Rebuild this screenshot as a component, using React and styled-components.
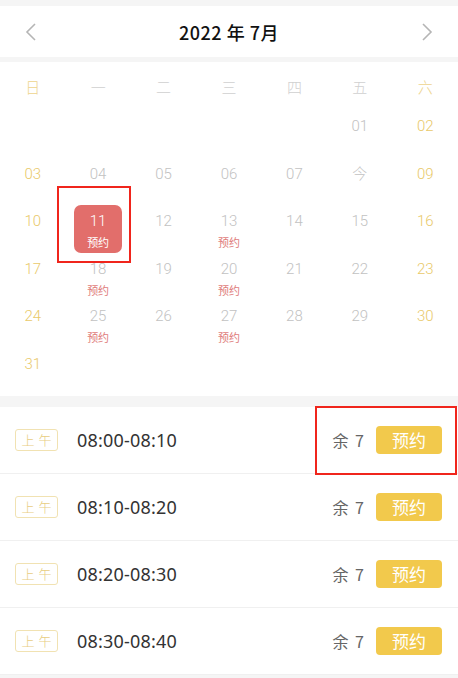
import styled, { createGlobalStyle } from "styled-components";

const GlobalStyle = createGlobalStyle`
    html, body {
        margin: 0;
        padding: 0;
        background: #f5f5f5;
    }
    body {
        font-family: "Noto Sans CJK SC", "Noto Sans", sans-serif;
    }
`;

const Page = styled.div`
    width: 458px;
    padding-top: 6px;
    background: #f5f5f5;
`;

const Header = styled.div`
    height: 51px;
    background: #fff;
    display: flex;
    align-items: center;
    justify-content: space-between;
    padding: 0 24px;
`;

const Title = styled.div`
    font-size: 18px;
    font-weight: 500;
    color: #111;
    letter-spacing: 0.5px;
`;

const Arrow = styled.svg`
    width: 14px;
    height: 18px;
    display: block;
`;

const Calendar = styled.div`
    margin-top: 5px;
    background: #fff;
    padding: 8px 0 8px;
`;

const Grid = styled.div`
    display: grid;
    grid-template-columns: repeat(7, 1fr);
`;

const WeekDay = styled.div`
    height: 32px;
    display: flex;
    align-items: center;
    justify-content: center;
    font-size: 15px;
    font-weight: 300;
    color: ${(p) => (p.$weekend ? "#eed48e" : "#d0d0d0")};
`;

const DayCell = styled.div`
    height: 47.6px;
    display: flex;
    justify-content: center;
    position: relative;
`;

const DayBox = styled.div`
    width: 48px;
    height: 48px;
    margin-top: 8px;
    padding-top: 6px;
    box-sizing: border-box;
    border-radius: 7px;
    display: flex;
    flex-direction: column;
    align-items: center;
    background: ${(p) => (p.$selected ? "#e26e6b" : "transparent")};
`;

const DayNum = styled.span`
    font-family: Roboto, "Noto Sans CJK SC", sans-serif;
    font-weight: 300;
    font-size: 15px;
    line-height: 20px;
    color: ${(p) => (p.$selected ? "#fff" : p.$weekend ? "#e9c96a" : "#c2c2c2")};
`;

const DayTag = styled.span`
    margin-top: 4px;
    font-size: 11px;
    line-height: 14px;
    color: ${(p) => (p.$selected ? "#fff" : "#e07c7a")};
`;

const Mark = styled.div`
    position: absolute;
    border: 2px solid #f0251c;
    box-sizing: border-box;
    pointer-events: none;
`;

const DayMark = styled(Mark)`
    left: -8px;
    top: -11px;
    width: 74px;
    height: 77px;
`;

const Slots = styled.div`
    margin-top: 11px;
    background: #fff;
`;

const SlotRow = styled.div`
    position: relative;
    height: 67px;
    box-sizing: border-box;
    border-bottom: 1px solid #f0f0f0;
    display: flex;
    align-items: center;
    padding: 0 16px 0 15px;
`;

const Period = styled.span`
    width: 43px;
    height: 22px;
    box-sizing: border-box;
    border: 1px solid #f1e2b2;
    border-radius: 3px;
    display: flex;
    align-items: center;
    justify-content: center;
    font-size: 13px;
    font-weight: 300;
    letter-spacing: 4px;
    padding-left: 4px;
    color: #e8cd82;
`;

const Time = styled.span`
    margin-left: 19px;
    flex: 1;
    font-family: "Noto Sans", sans-serif;
    font-size: 18px;
    letter-spacing: 0.2px;
    color: #333;
`;

const Remain = styled.span`
    font-size: 16px;
    color: #666;
    margin-right: 12px;
    word-spacing: 3px;
`;

const BookButton = styled.button`
    width: 66px;
    height: 28px;
    border: none;
    border-radius: 4px;
    background: #f2c94c;
    color: #fff;
    font-family: "Noto Sans CJK SC", sans-serif;
    font-size: 17px;
    padding: 0;
    cursor: pointer;
`;

const SlotMark = styled(Mark)`
    left: 315px;
    right: 1px;
    top: -1px;
    bottom: -2px;
`;

const weekDays = ["日", "一", "二", "三", "四", "五", "六"];

const booked = [11, 13, 18, 20, 25, 27];

const days = [];
for (let i = 0; i < 5; i++) days.push(null);
for (let d = 1; d <= 31; d++) days.push(d);

const slots = ["08:00-08:10", "08:10-08:20", "08:20-08:30", "08:30-08:40"];

const Chevron = ({ left }) => (
    <Arrow viewBox="0 0 14 18">
        <polyline
            points={left ? "11,1 3,9 11,17" : "3,1 11,9 3,17"}
            fill="none"
            stroke="#b5b5b5"
            strokeWidth="1.6"
        />
    </Arrow>
);

const App = () => {
    return (
        <Page>
            <GlobalStyle />
            <Header>
                <Chevron left />
                <Title>2022 年 7月</Title>
                <Chevron />
            </Header>
            <Calendar>
                <Grid>
                    {weekDays.map((w, i) => (
                        <WeekDay key={w} $weekend={i === 0 || i === 6}>
                            {w}
                        </WeekDay>
                    ))}
                    {days.map((d, i) => {
                        if (!d) return <DayCell key={"e" + i} />;
                        const weekend = i % 7 === 0 || i % 7 === 6;
                        const selected = d === 11;
                        const label = d === 8 ? "今" : String(d).padStart(2, "0");
                        return (
                            <DayCell key={d}>
                                <DayBox $selected={selected}>
                                    <DayNum $weekend={weekend} $selected={selected}>
                                        {label}
                                    </DayNum>
                                    {booked.includes(d) && (
                                        <DayTag $selected={selected}>预约</DayTag>
                                    )}
                                </DayBox>
                                {selected && <DayMark />}
                            </DayCell>
                        );
                    })}
                </Grid>
            </Calendar>
            <Slots>
                {slots.map((s, i) => (
                    <SlotRow key={s}>
                        <Period>上午</Period>
                        <Time>{s}</Time>
                        <Remain>余 7</Remain>
                        <BookButton>预约</BookButton>
                        {i === 0 && <SlotMark />}
                    </SlotRow>
                ))}
            </Slots>
        </Page>
    );
};

export default App;
